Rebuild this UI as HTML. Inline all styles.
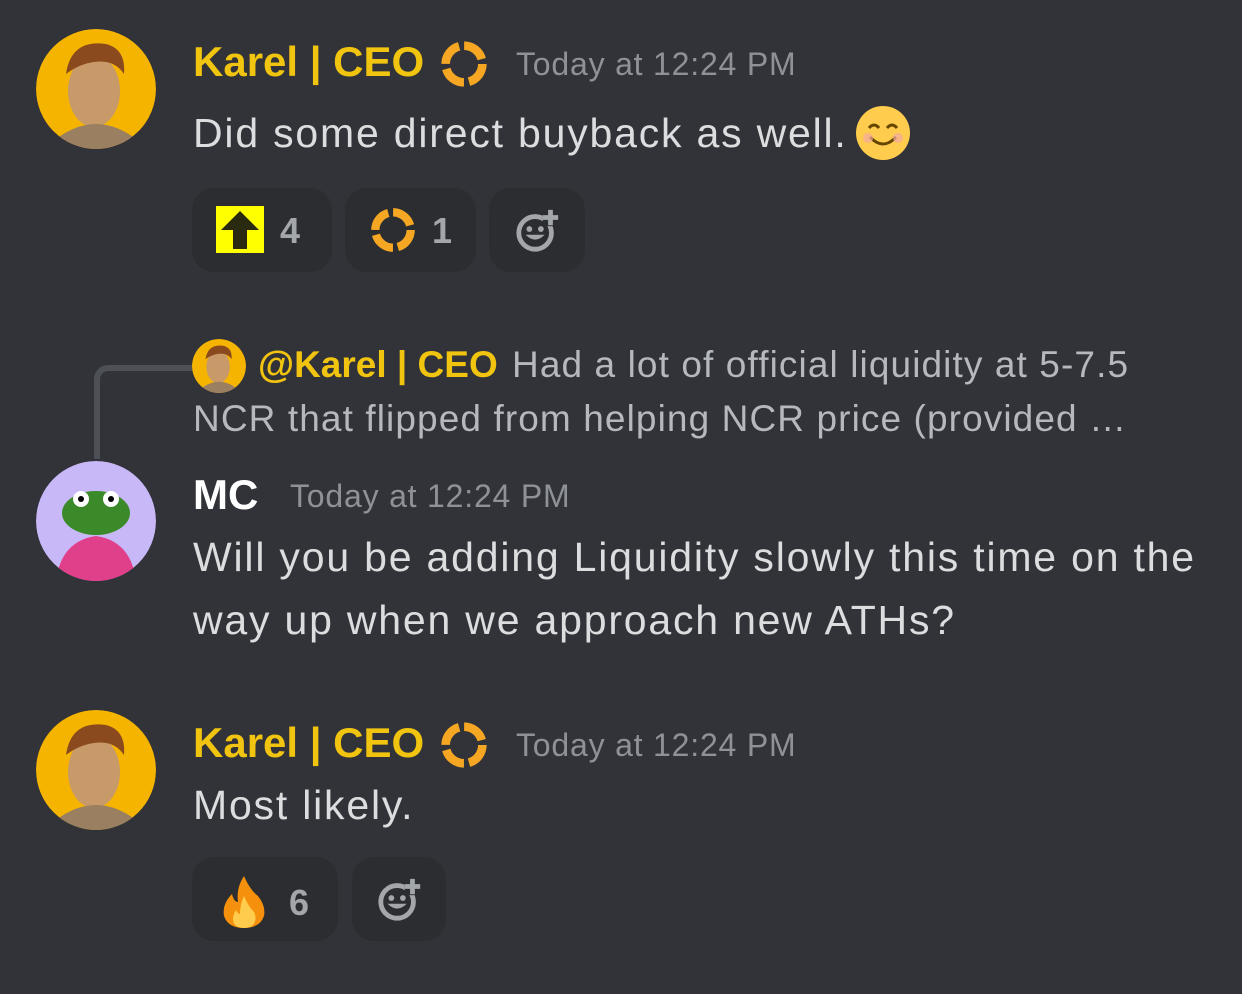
<!DOCTYPE html>
<html><head><meta charset="utf-8"><style>
body{margin:0;width:1242px;height:994px;background:#313338;font-family:"Liberation Sans",sans-serif;position:relative;overflow:hidden}
.a{position:absolute;white-space:nowrap}
.av{position:absolute;border-radius:50%}
.name{color:#f1c40f;font-weight:bold;font-size:42px}
.ts{color:#8e9297;font-size:32px;letter-spacing:0.8px}
.txt{color:#dcddde;font-size:41px;letter-spacing:1.8px}
.rx{position:absolute;background:#2b2d31;border-radius:22px;height:84px}
.cnt{color:#a3a6aa;font-size:36px;font-weight:bold}
</style></head><body>
<svg width="0" height="0" style="position:absolute"><defs>
<symbol id="ring" viewBox="0 0 50 50"><circle cx="25" cy="25" r="17" fill="none" stroke="#f5a623" stroke-width="8" stroke-dasharray="22 4.7"/></symbol>
<symbol id="add" viewBox="0 0 50 50"><circle cx="22" cy="28" r="17" fill="none" stroke="#a3a6aa" stroke-width="5"/><rect x="30" y="5" width="19" height="16" fill="#2b2d31"/><path d="M38 4v16M30 12h16" stroke="#a3a6aa" stroke-width="5"/><circle cx="16" cy="24" r="3" fill="#a3a6aa"/><circle cx="28" cy="24" r="3" fill="#a3a6aa"/><path d="M12 30q10 10 20 0z" fill="#a3a6aa"/></symbol>
<symbol id="karel" viewBox="0 0 120 120"><circle cx="60" cy="60" r="60" fill="#f5b400"/><ellipse cx="58" cy="62" rx="26" ry="36" fill="#c89a6a"/><path d="M30 45q5-35 40-30q20 5 18 30q-10-15-30-12q-15 2-28 12z" fill="#8a4a1e"/><path d="M20 110q40-30 80 0v10h-80z" fill="#9a8060"/></symbol>
</defs></svg>

<svg class="av" style="left:36px;top:29px" width="120" height="120"><use href="#karel"/></svg>
<div class="a name" style="left:193px;top:38px">Karel | CEO</div>
<svg class="a" style="left:437px;top:37px" width="54" height="54"><use href="#ring"/></svg>
<div class="a ts" style="left:516px;top:46px">Today at 12:24 PM</div>
<div class="a txt" style="left:193px;top:110px">Did some direct buyback as well.</div>
<div class="a" style="left:856px;top:106px;width:54px;height:54px;border-radius:50%;background:#ffcc4d"><svg width="54" height="54"><path d="M13 22q5-6 10 0M31 22q5-6 10 0" stroke="#664500" stroke-width="3" fill="none"/><path d="M14 31q13 14 26 0" stroke="#664500" stroke-width="3" fill="none"/><circle cx="12" cy="32" r="5" fill="#f4a9a0" opacity=".7"/><circle cx="42" cy="32" r="5" fill="#f4a9a0" opacity=".7"/></svg></div>

<div class="rx" style="left:192px;top:188px;width:140px"></div>
<div class="a" style="left:216px;top:206px;width:48px;height:47px;background:#ffff00"><svg width="48" height="47"><path d="M24 5L5 24h12v19h14V24h12z" fill="#2a2a10"/></svg></div>
<div class="a cnt" style="left:280px;top:210px">4</div>
<div class="rx" style="left:345px;top:188px;width:131px"></div>
<svg class="a" style="left:367px;top:204px" width="52" height="52"><use href="#ring"/></svg>
<div class="a cnt" style="left:432px;top:210px">1</div>
<div class="rx" style="left:489px;top:188px;width:96px"></div>
<svg class="a" style="left:514px;top:206px" width="48" height="48"><use href="#add"/></svg>

<div class="a" style="left:94px;top:365px;width:96px;height:88px;border-left:6px solid #4e5058;border-top:6px solid #4e5058;border-top-left-radius:14px"></div>
<svg class="av" style="left:192px;top:339px" width="54" height="54"><use href="#karel"/></svg>
<div class="a" style="left:258px;top:344px;font-size:37px;color:#f1c40f;font-weight:bold">@Karel | CEO</div>
<div class="a" style="left:512px;top:344px;font-size:37px;color:#b5b8bc;letter-spacing:1.1px">Had a lot of official liquidity at 5-7.5</div>
<div class="a" style="left:193px;top:398px;font-size:37px;color:#b5b8bc;letter-spacing:1.1px">NCR that flipped from helping NCR price (provided …</div>

<svg class="av" style="left:36px;top:461px" width="120" height="120"><circle cx="60" cy="60" r="60" fill="#c8b8f8"/><path d="M20 120q5-40 40-45q35 5 40 45z" fill="#e0408a"/><ellipse cx="60" cy="52" rx="34" ry="22" fill="#3a8a2a"/><circle cx="45" cy="38" r="8" fill="#fff"/><circle cx="75" cy="38" r="8" fill="#fff"/><circle cx="45" cy="38" r="3"/><circle cx="75" cy="38" r="3"/></svg>
<div class="a name" style="left:193px;top:471px;color:#fff">MC</div>
<div class="a ts" style="left:290px;top:478px">Today at 12:24 PM</div>
<div class="a txt" style="left:193px;top:534px">Will you be adding Liquidity slowly this time on the</div>
<div class="a txt" style="left:193px;top:597px">way up when we approach new ATHs?</div>

<svg class="av" style="left:36px;top:710px" width="120" height="120"><use href="#karel"/></svg>
<div class="a name" style="left:193px;top:719px">Karel | CEO</div>
<svg class="a" style="left:437px;top:718px" width="54" height="54"><use href="#ring"/></svg>
<div class="a ts" style="left:516px;top:727px">Today at 12:24 PM</div>
<div class="a txt" style="left:193px;top:782px">Most likely.</div>

<div class="rx" style="left:192px;top:857px;width:146px"></div>
<svg class="a" style="left:220px;top:874px" width="48" height="54"><path d="M24 2q6 14 14 20q8 10 6 20q-4 12-20 12q-16 0-20-12q-2-12 8-22q2 8 6 8q-2-14 6-26z" fill="#f4900c"/><path d="M24 22q4 10 10 16q4 8-2 14q-8 4-16 0q-6-6 0-16q2 4 4 4q0-10 4-18z" fill="#ffcc4d"/></svg>
<div class="a cnt" style="left:289px;top:882px">6</div>
<div class="rx" style="left:352px;top:857px;width:94px"></div>
<svg class="a" style="left:376px;top:875px" width="48" height="48"><use href="#add"/></svg>
</body></html>
